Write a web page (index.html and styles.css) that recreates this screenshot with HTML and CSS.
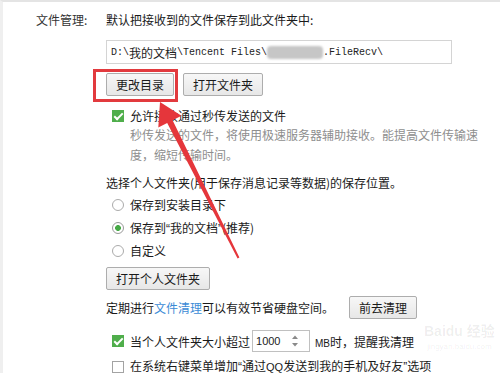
FILE: index.html
```html
<!DOCTYPE html>
<html lang="zh-CN">
<head>
<meta charset="utf-8">
<title>文件管理</title>
<link rel="stylesheet" href="styles.css">
</head>
<body>
<div class="frame">
  <div class="page">
    <div class="label">文件管理:</div>
    <div class="content">
      <div class="line">默认把接收到的文件保存到此文件夹中:</div>
      <div class="path"><span class="mono">D:\</span>我的文档<span class="mono">\Tencent Files\</span><span class="blur"></span><span class="mono">.FileRecv\</span></div>
      <div class="btn-row">
        <button class="btn">更改目录</button>
        <button class="btn">打开文件夹</button>
      </div>
      <div class="check-row first"><span class="cb checked"></span>允许接收通过秒传发送的文件</div>
      <div class="hint">秒传发送的文件，将使用极速服务器辅助接收。能提高文件传输速度，缩短传输时间。</div>
      <div class="line section">选择个人文件夹(用于保存消息记录等数据)的保存位置。</div>
      <div class="radio-row"><span class="rb"></span>保存到安装目录下</div>
      <div class="radio-row"><span class="rb on"></span><span>保存到<span class="q">“</span>我的文档<span class="q">”</span>(推荐)</span></div>
      <div class="radio-row"><span class="rb"></span>自定义</div>
      <button class="btn personal">打开个人文件夹</button>
      <div class="clean-row">
        <span>定期进行<span class="link">文件清理</span>可以有效节省硬盘空间。</span>
        <button class="btn">前去清理</button>
      </div>
      <div class="size-row">
        <span class="cb checked"></span>
        <span>当个人文件夹大小超过</span>
        <span class="spin"><span class="num">1000</span>
          <svg class="spin-arrows" width="8" height="14" viewBox="0 0 8 14"><path d="M4 1.5 L7 5 L1 5 Z" fill="#8a8a8a"/><path d="M4 12.5 L7 9 L1 9 Z" fill="#8a8a8a"/></svg>
        </span>
        <span class="mb"><span class="lat">MB</span>时，提醒我清理</span>
      </div>
      <div class="check-row last"><span class="cb"></span><span>在系统右键菜单增加<span class="q">“</span>通过<span class="lat">QQ</span>发送到我的手机及好友<span class="q">”</span>选项</span></div>
    </div>
  </div>
</div>

<div class="watermark"><span class="wm-big">Baidu 经验</span><span class="wm-small">jingyan.baidu.com</span></div>

<div class="highlight"></div>
<svg class="arrow" width="500" height="373" viewBox="0 0 500 373">
  <polygon points="160,102 181.5,115.7 172.6,120.2 239.4,257.5 237.6,258.5 167.2,123 158.3,127.5" fill="#e5363b"/>
</svg>
</body>
</html>
```

FILE: styles.css
```css
html, body {
  margin: 0;
  padding: 0;
}

body {
  width: 500px;
  height: 373px;
  overflow: hidden;
  position: relative;
  background: #fff;
  font-family: "Noto Sans CJK SC", "Microsoft YaHei", sans-serif;
  font-size: 12px;
  color: #1a1a1a;
}

.frame {
  height: 373px;
  box-sizing: border-box;
  border-top: 2px solid #e4e4e4;
  border-left: 3px solid #efefef;
}

.page {
  display: grid;
  grid-template-columns: 70px 1fr;
  padding: 8px 0 0 33px;
}

.label {
  line-height: 20px;
  color: #333;
}

.content {
  display: flex;
  flex-direction: column;
  align-items: flex-start;
}

.line {
  line-height: 20px;
  white-space: nowrap;
}

.path {
  margin-top: 10px;
  width: 346px;
  height: 24px;
  box-sizing: border-box;
  border: 1px solid #d4d4d4;
  padding-left: 4px;
  display: flex;
  align-items: center;
  white-space: nowrap;
  color: #222;
}

.mono {
  font-family: "Liberation Mono", "DejaVu Sans Mono", monospace;
  font-size: 10px;
}

.blur {
  display: inline-block;
  width: 56px;
  height: 13px;
  border-radius: 4px;
  background: #c6c6c6;
  filter: blur(1px);
}

.btn-row {
  margin-top: 9px;
  display: flex;
  gap: 9px;
}

.btn {
  height: 23px;
  box-sizing: border-box;
  padding: 0 9px;
  border: 1px solid #adadad;
  border-radius: 2px;
  background: linear-gradient(#f7f7f7, #e7e7e7);
  font: inherit;
  line-height: 21px;
  color: #1a1a1a;
  white-space: nowrap;
}

.check-row {
  display: flex;
  align-items: center;
  gap: 6px;
  margin-left: 6px;
  line-height: 18px;
  white-space: nowrap;
}

.check-row.first {
  margin-top: 11px;
}

.check-row.last {
  margin-top: 4px;
  line-height: 20px;
}

.q {
  font-family: "Liberation Sans", Arial, sans-serif;
  font-size: 12px;
}

.cb {
  flex: none;
  position: relative;
  width: 12px;
  height: 12px;
  box-sizing: border-box;
  border: 1px solid #a3a3a3;
  background: #fff;
}

.cb.checked {
  background: #4fae4b;
  border-color: #4fae4b;
}

.cb.checked::after {
  content: "";
  position: absolute;
  left: 3px;
  top: 0px;
  width: 3px;
  height: 7px;
  border-right: 2px solid #fff;
  border-bottom: 2px solid #fff;
  transform: rotate(45deg);
}

.hint {
  margin-left: 24px;
  width: 352px;
  line-height: 20px;
  color: #8e8e8e;
}

.section {
  margin-top: 8px;
}

.radio-row {
  display: flex;
  align-items: center;
  gap: 6px;
  height: 23px;
  margin-left: 6px;
  white-space: nowrap;
}

.rb {
  flex: none;
  width: 12px;
  height: 12px;
  box-sizing: border-box;
  border: 1px solid #ababab;
  border-radius: 50%;
  background: #fff;
}

.rb.on {
  background: radial-gradient(circle, #46a946 0 2.6px, #fff 3.2px);
  border-color: #9a9a9a;
}

.btn.personal {
  margin-top: 5px;
}

.clean-row {
  margin-top: 6px;
  display: flex;
  align-items: center;
  gap: 15px;
  height: 23px;
  white-space: nowrap;
}

.link {
  color: #3b8bd6;
}

.size-row {
  margin-top: 11px;
  margin-left: 6px;
  display: flex;
  align-items: center;
  height: 22px;
  white-space: nowrap;
}

.size-row .cb {
  margin-right: 6px;
}

.spin {
  margin-left: 2px;
  width: 58px;
  height: 22px;
  box-sizing: border-box;
  border: 1px solid #c0c0c0;
  display: flex;
  align-items: center;
  justify-content: space-between;
  padding: 0 10px 0 3px;
}

.num {
  font-family: "Liberation Sans", Arial, sans-serif;
  font-size: 11px;
  color: #222;
}

.mb {
  margin-left: 5px;
}

.lat {
  font-family: "Liberation Sans", Arial, sans-serif;
  font-size: 11px;
}

.mb .lat {
  font-size: 10px;
}

.watermark {
  position: absolute;
  left: 424px;
  top: 322px;
  display: flex;
  flex-direction: column;
  align-items: center;
  gap: 2px;
  white-space: nowrap;
  color: rgba(0, 0, 0, 0.07);
  pointer-events: none;
}

.wm-big {
  font-family: "Liberation Sans", "Noto Sans CJK SC", sans-serif;
  font-size: 14px;
  font-weight: bold;
  line-height: 18px;
}

.wm-small {
  font-family: "Liberation Sans", Arial, sans-serif;
  font-size: 8px;
  line-height: 10px;
}

.highlight {
  position: absolute;
  left: 93px;
  top: 69px;
  width: 85px;
  height: 33px;
  box-sizing: border-box;
  border: 3px solid #e23a3e;
}

.arrow {
  position: absolute;
  left: 0;
  top: 0;
  pointer-events: none;
}
```
